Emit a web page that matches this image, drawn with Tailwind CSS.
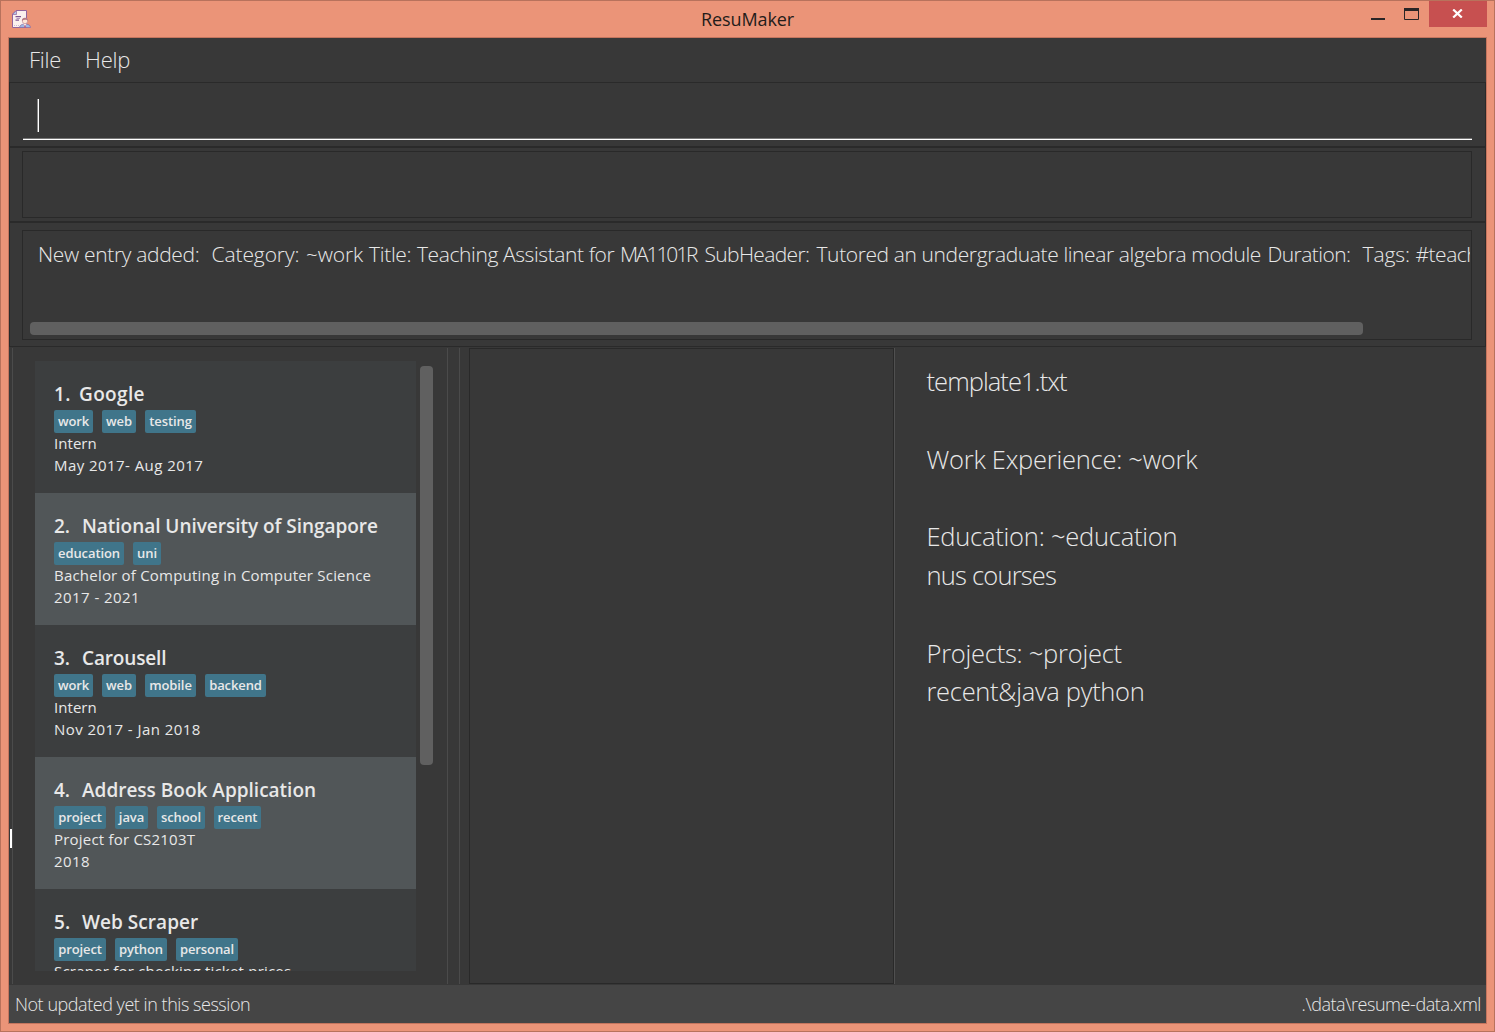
<!DOCTYPE html>
<html lang="en">
<head>
<meta charset="utf-8">
<title>ResuMaker</title>
<script src="https://cdn.jsdelivr.net/npm/@tailwindcss/browser@4"></script>
</head>
<body class="overflow-hidden font-['Open_Sans',sans-serif] text-[#e8e8e8]">
<div class="flex h-[1032px] w-[1495px] flex-col border border-[#b8725c] bg-[#eb9478] px-[7px] pb-[7px]">

  <!-- Title bar -->
  <header class="relative flex h-9 shrink-0 items-start justify-between">
    <svg class="mt-[9px] ml-1 h-[18px] w-[19px]" viewBox="0 0 19 18" fill="none">
      <path d="M4 .5H14.500V17.500H.5V4z" fill="#fbf1ee" stroke="#93659c"/>
      <path d="M.5 4.500H4.500V.5z" fill="#b4c8ea" stroke="#93659c" stroke-width=".7"/>
      <path d="M3.500 6.700H9M3.500 10.200H7" stroke="#7d5591" stroke-width="1.200"/>
      <path d="M4.500 8.500H8" stroke="#b59abd"/>
      <path d="M2 15.500H7" stroke="#cbb9d4" stroke-dasharray="1 1"/>
      <path d="M7.500 17.500C7.800 14.800 10 14.500 11.300 14.200H14.700C16.500 14.500 18.300 15 18.500 17.500z" fill="#9fb9e2" stroke="#8669a3" stroke-width=".7"/>
      <path d="M11.300 13.500H14.700L13 16.500z" fill="#fbe9df"/>
      <path d="M12.500 15.200H13.500L13.800 17.500H12.200z" fill="#c25078"/>
      <circle cx="13" cy="11" r="2.700" fill="#fde6d6" stroke="#b98291" stroke-width=".6"/>
      <path d="M9.900 11C9.500 6.800 16.500 6.800 16.100 11C15 9.600 12 9.200 9.900 11z" fill="#b57c86"/>
    </svg>
    <h1 class="absolute inset-x-0 top-[5px] text-center text-[18px] leading-[26px] tracking-[-0.1px] text-[#241c1a]">ResuMaker</h1>
    <div class="relative flex items-start">
      <svg class="mr-[9px] h-[26px] w-[50px]" viewBox="0 0 50 26" fill="none">
        <rect x="1" y="17" width="14" height="2" fill="#2a2526"/>
        <path d="M34.500 8V18.500H48.500V8" stroke="#2a2526"/>
        <rect x="34" y="7" width="15" height="3" fill="#2a2526"/>
      </svg>
      <div class="flex h-[26px] w-[58px] items-start bg-[#c75050] pl-[23px]">
        <svg class="mt-2 h-[9px] w-[11px]" viewBox="0 0 11 9"><path d="M1.200 .5L9.800 8.500M9.800 .5L1.200 8.500" stroke="#fff" stroke-width="2.200"/></svg>
      </div>
    </div>
  </header>

  <main class="relative flex min-h-0 grow flex-col border border-[#c4755e] bg-[#383838]">
    <nav class="flex h-11 shrink-0 gap-6 pl-5 text-[22px] font-light leading-[42px] tracking-[-0.25px]">
      <span>File</span><span>Help</span>
    </nav>

    <!-- Command input -->
    <section class="flex h-[66px] shrink-0 flex-col border border-b-2 border-[#2a2a2a] px-[13px] pt-4">
      <div class="flex h-[41px] border-b border-white pl-[14px] shadow-[inset_0_-1px_0_#777]">
        <div class="h-[33px] w-[2px] border-l border-[#888] bg-white"></div>
      </div>
    </section>

    <section class="h-[75px] shrink-0 border-x border-b-2 border-[#2a2a2a] pl-3 pr-[13px] pt-[3px]">
      <div class="h-[67px] border border-[#292929]"></div>
    </section>

    <!-- Command result -->
    <section class="h-[124px] shrink-0 border-x border-b border-[#2a2a2a] pl-3 pr-[13px] pt-[7px]">
      <div class="flex h-[110px] flex-col justify-between border border-[#292929] pb-1">
        <p class="ml-[15px] mr-px mt-[7px] flex overflow-hidden whitespace-nowrap text-[21px] font-light leading-8">
          <span class="w-[173.5px] shrink-0 tracking-[-0.33px]">New entry added:</span>
          <span class="w-[94.500px] shrink-0 tracking-[-0.1px]">Category:</span>
          <span class="w-[63px] shrink-0 tracking-[-0.15px]">~work</span>
          <span class="w-[48px] shrink-0 tracking-[-0.3px]">Title:</span>
          <span class="w-[203px] shrink-0 tracking-[-0.4px]">Teaching Assistant for</span>
          <span class="w-[84.5px] shrink-0 tracking-[-2.1px]">MA1101R</span>
          <span class="w-[112px] shrink-0 tracking-[-0.65px]">SubHeader:</span>
          <span class="w-[451px] shrink-0 tracking-[-0.39px]">Tutored an undergraduate linear algebra module</span>
          <span class="w-[95px] shrink-0 tracking-[-0.55px]">Duration:</span>
          <span class="w-[53px] shrink-0 tracking-[-0.1px]">Tags:</span>
          <span class="shrink-0 tracking-[-0.5px]">#teaching</span>
        </p>
        <div class="ml-[7px] h-[13px] w-[1333px] rounded-[4px] bg-[#606060]"></div>
      </div>
    </section>

    <div class="flex min-h-0 grow pt-px">
      <!-- Entry list -->
      <section class="ml-[3px] flex h-[636px] w-[436px] shrink-0 border-x border-[#4b4b4b] pl-[22px] pt-[13px]">
        <ul id="entries" class="h-[610px] w-[381px] shrink-0 overflow-hidden"></ul>
        <div class="ml-1 mt-[5px] h-[399px] w-[13px] rounded-[4px] bg-[#606060]"></div>
      </section>
      <div class="ml-[11px] h-[636px] w-[10px] border-l border-[#4b4b4b]"></div>
      <section class="h-[636px] w-[425px] shrink-0 border border-[#292929]"></section>
      <section class="h-[636px] grow whitespace-nowrap border-l border-[#505050] pl-[31.5px] pt-[14px] text-[25.5px] font-light leading-[38.8px]">
        <p class="tracking-[-0.95px]">template1.txt</p>
        <p>&nbsp;</p>
        <p class="tracking-[-0.25px]">Work Experience: ~work</p>
        <p>&nbsp;</p>
        <p class="tracking-[-0.23px]">Education: ~education</p>
        <p class="tracking-[-0.8px]">nus courses</p>
        <p>&nbsp;</p>
        <p class="tracking-[-0.25px]">Projects: ~project</p>
        <p class="tracking-[-0.3px]">recent&amp;java python</p>
      </section>
    </div>

    <div class="absolute left-px top-[791px] h-[19px] w-[2px] bg-white"></div>

    <footer class="flex h-[38px] shrink-0 items-center justify-between bg-[#454545] pl-[6px] pr-[5px] pt-px text-[18px] font-light">
      <span class="tracking-[-0.46px]">Not updated yet in this session</span>
      <span class="tracking-[-0.43px]">.\data\resume-data.xml</span>
    </footer>
  </main>
</div>

<script>
  const entries = [
    ['1.', 'Google', 'tracking-[0.35px]', [['work', 39], ['web', 34], ['testing', 51]], 'Intern', 'May 2017- Aug 2017'],
    ['2.', 'National University of Singapore', 'tracking-[-0.03px]', [['education', 70], ['uni', 28]], 'Bachelor of Computing in Computer Science', '2017 - 2021'],
    ['3.', 'Carousell', 'tracking-[-0.15px]', [['work', 39], ['web', 34], ['mobile', 51], ['backend', 61]], 'Intern', 'Nov 2017 - Jan 2018'],
    ['4.', 'Address Book Application', 'tracking-[0px]', [['project', 52], ['java', 33], ['school', 48], ['recent', 47]], 'Project for CS2103T', '2018'],
    ['5.', 'Web Scraper', 'tracking-[0.05px]', [['project', 52], ['python', 52], ['personal', 62]], 'Scraper for checking ticket prices', ''],
  ];
  document.getElementById('entries').innerHTML = entries.map(([n, name, ls, tags, role, dates], i) => `
    <li class="h-[132px] whitespace-nowrap pl-[19px] pt-[19px] ${i % 2 ? 'bg-[#515658]' : 'bg-[#3c3e3f]'}">
      <h2 class="flex h-[30px] text-[19px] font-semibold leading-[28px] ${ls}"><span class="${i ? 'w-7' : 'w-[25px]'}">${n}</span>${name}</h2>
      <div class="mb-[-1px] flex h-[23px] gap-[9px]">${tags.map(([t, w]) => `<span class="flex justify-center rounded-[2px] bg-[#40758a] text-[13px] font-semibold leading-[22px] tracking-[-0.1px]" style="width:${w}px">${t}</span>`).join('')}</div>
      <p class="text-[15px] leading-[22px] ${role === 'Intern' ? 'tracking-[0.05px]' : 'tracking-[0.21px]'}">${role}</p>
      ${dates && `<p class="text-[15px] leading-[22px] tracking-[0.44px]">${dates}</p>`}
    </li>`).join('');
</script>
</body>
</html>
